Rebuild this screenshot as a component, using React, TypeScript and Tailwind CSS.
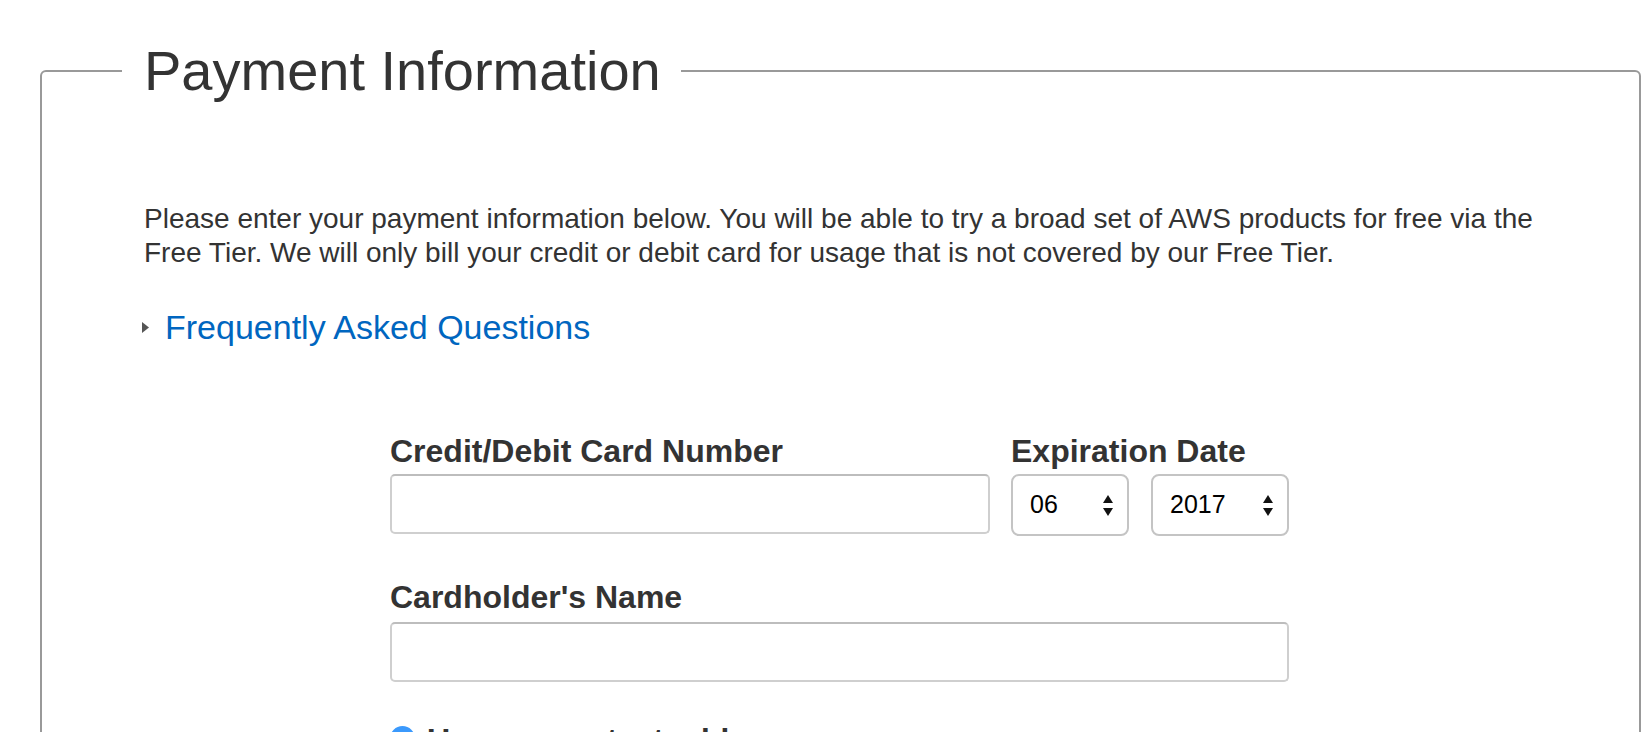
import React from "react";

function SelectArrows() {
  return (
    <svg width="10" height="21" viewBox="0 0 10 21" className="shrink-0">
      <polygon points="5,0 10,8 0,8" fill="#111" />
      <polygon points="0,13 10,13 5,21" fill="#111" />
    </svg>
  );
}

function FakeSelect({ value, width }: { value: string; width: string }) {
  return (
    <div
      className={`${width} h-[62px] flex items-center justify-between pl-[17px] pr-[14px] rounded-[8px] border-2 border-[#c4c4c4] bg-white text-[25px] text-black`}
    >
      <span>{value}</span>
      <SelectArrows />
    </div>
  );
}

export default function App() {
  return (
    <div className="w-[1646px] h-[732px] overflow-hidden bg-white font-['Liberation_Sans',Arial,sans-serif] text-[#333]">
      <fieldset className="ml-[40px] mr-[5px] mt-[39px] border-2 border-[#999] rounded-[6px] pl-[80px] pr-[20px] pb-[40px]">
        <legend className="pl-[22px] pr-[20px] text-[56px] leading-[64px] text-[#333]">Payment Information</legend>

        <p className="ml-[22px] mt-[99px] w-[1420px] text-[28px] leading-[34px]">
          Please enter your payment information below. You will be able to try a broad set of AWS products for free via the Free Tier. We will only bill your credit or debit card for usage that is not covered by our Free Tier.
        </p>

        <div className="ml-[20px] mt-[37px] flex items-center gap-[16px] h-[40px]">
          <svg width="7" height="11" viewBox="0 0 7 11">
            <polygon points="0,0 7,5.5 0,11" fill="#555" />
          </svg>
          <a href="#" className="text-[34px] leading-[40px] text-[#0066c0]">Frequently Asked Questions</a>
        </div>

        <div className="ml-[268px] mt-[86px] w-[900px]">
          <div className="flex gap-[21px]">
            <div className="flex flex-col">
              <label className="text-[32px] leading-[36px] font-bold mb-[5px]">Credit/Debit Card Number</label>
              <input className="w-[600px] h-[60px] rounded-[5px] border-2 border-[#cfcfcf] border-t-[#bdbdbd] outline-none" />
            </div>
            <div className="flex flex-col">
              <label className="text-[32px] leading-[36px] font-bold mb-[5px]">Expiration Date</label>
              <div className="flex gap-[22px]">
                <FakeSelect value="06" width="w-[118px]" />
                <FakeSelect value="2017" width="w-[138px]" />
              </div>
            </div>
          </div>

          <label className="block mt-[43px] text-[32px] leading-[36px] font-bold mb-[7px]">Cardholder's Name</label>
          <input className="w-[899px] h-[60px] rounded-[5px] border-2 border-[#cfcfcf] border-t-[#bdbdbd] outline-none" />

          <div className="mt-[44px] flex items-start gap-[12px]">
            <span className="w-[25px] h-[25px] rounded-full bg-[#3b99fc] shrink-0" />
            <span className="text-[32px] leading-[28px] font-bold">Use my contact address</span>
          </div>
        </div>
      </fieldset>
    </div>
  );
}
